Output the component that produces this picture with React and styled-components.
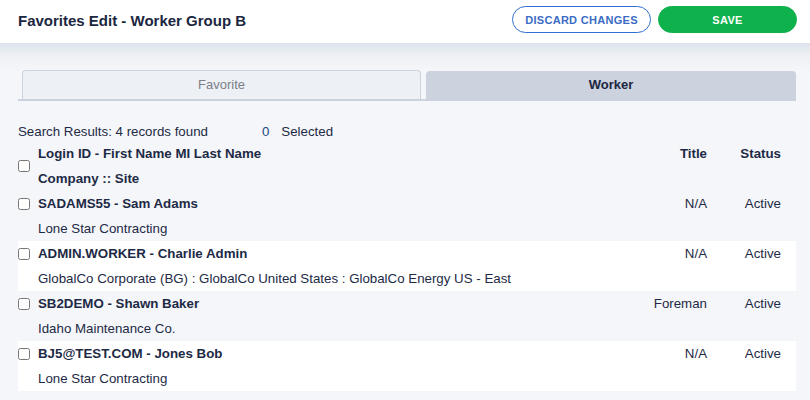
import React from "react";
import styled, { createGlobalStyle } from "styled-components";

const GlobalStyle = createGlobalStyle`
  html, body {
    margin: 0;
    padding: 0;
    background: #f5f6fa;
    font-family: "Liberation Sans", Arial, sans-serif;
    color: #1d2a45;
  }
  * { box-sizing: border-box; }
`;

const Page = styled.div`
  width: 810px;
  min-height: 400px;
  background: #f5f6fa;
`;

const TopBar = styled.header`
  height: 43px;
  background: #ffffff;
  display: flex;
  align-items: center;
  justify-content: space-between;
  padding: 0 13px 0 18px;
`;

const Heading = styled.h1`
  margin: 0;
  font-size: 15px;
  font-weight: 700;
  color: #1b2640;
  padding-bottom: 2px;
`;

const Actions = styled.div`
  display: flex;
  gap: 7px;
  align-self: flex-start;
  padding-top: 6px;
`;

const PillButton = styled.button`
  width: 139px;
  height: 27px;
  border-radius: 14px;
  font-family: "Liberation Sans", Arial, sans-serif;
  font-size: 11px;
  font-weight: 700;
  letter-spacing: 0.3px;
  text-transform: uppercase;
  cursor: pointer;
  border: 1px solid ${(p) => (p.$primary ? "#0fb14c" : "#2f6fd1")};
  background: ${(p) => (p.$primary ? "#0fb14c" : "#ffffff")};
  color: ${(p) => (p.$primary ? "#ffffff" : "#3a6cc4")};
`;

const Main = styled.main`
  padding: 27px 14px 10px 18px;
  background: linear-gradient(#dde2eb 0px, #eef0f5 12px, #f5f6fa 28px);
`;

const TabBar = styled.div`
  display: flex;
  align-items: flex-end;
  gap: 5px;
  padding-left: 4px;
  border-bottom: 2px solid #ccd2dd;
`;

const Tab = styled.div`
  height: ${(p) => (p.$active ? "28px" : "29px")};
  width: ${(p) => p.$w}px;
  display: flex;
  align-items: center;
  justify-content: center;
  padding-bottom: 2px;
  font-size: 13px;
  border-radius: 4px 4px 0 0;
  border: 1px solid ${(p) => (p.$active ? "#ccd2de" : "#cdd3dd")};
  border-bottom: none;
  background: ${(p) => (p.$active ? "#ccd2de" : "#edf0f5")};
  color: ${(p) => (p.$active ? "#1c2741" : "#7b7f88")};
  font-weight: ${(p) => (p.$active ? 700 : 400)};
`;

const Summary = styled.div`
  display: flex;
  align-items: center;
  height: 20px;
  margin-top: 20px;
  font-size: 13.3px;
  color: #1d2a45;
`;

const Count = styled.span`
  margin-left: 54px;
  color: #22477a;
`;

const SelectedLabel = styled.span`
  margin-left: 12px;
`;

const Grid = styled.div`
  display: grid;
  grid-template-columns: 20px 1fr 100px 74px;
  padding-right: 15px;
  font-size: 13.3px;
  background: ${(p) => (p.$white ? "#ffffff" : "transparent")};
`;

const Cell = styled.div`
  height: 25px;
  display: flex;
  align-items: center;
  font-weight: ${(p) => (p.$bold ? 700 : 400)};
  justify-content: ${(p) => (p.$right ? "flex-end" : "flex-start")};
  grid-column: ${(p) => p.$span || "auto"};
  white-space: nowrap;
`;

const BoxCell = styled.div`
  grid-row: ${(p) => (p.$tall ? "1 / span 2" : "1")};
  display: flex;
  align-items: center;
`;

const Check = styled.input.attrs({ type: "checkbox" })`
  width: 12px;
  height: 12px;
  margin: 0;
`;

const rows = [
  { id: "SADAMS55 - Sam Adams", co: "Lone Star Contracting", title: "N/A", status: "Active" },
  {
    id: "ADMIN.WORKER - Charlie Admin",
    co: "GlobalCo Corporate (BG) : GlobalCo United States : GlobalCo Energy US - East",
    title: "N/A",
    status: "Active",
  },
  { id: "SB2DEMO - Shawn Baker", co: "Idaho Maintenance Co.", title: "Foreman", status: "Active" },
  { id: "BJ5@TEST.COM - Jones Bob", co: "Lone Star Contracting", title: "N/A", status: "Active" },
];

export default function App() {
  return (
    <Page>
      <GlobalStyle />
      <TopBar>
        <Heading>Favorites Edit - Worker Group B</Heading>
        <Actions>
          <PillButton>Discard Changes</PillButton>
          <PillButton $primary>Save</PillButton>
        </Actions>
      </TopBar>
      <Main>
        <TabBar>
          <Tab $w={399}>Favorite</Tab>
          <Tab $w={370} $active>
            Worker
          </Tab>
        </TabBar>
        <Summary>
          Search Results: 4 records found
          <Count>0</Count>
          <SelectedLabel>Selected</SelectedLabel>
        </Summary>
        <Grid>
          <BoxCell $tall>
            <Check />
          </BoxCell>
          <Cell $bold>Login ID - First Name MI Last Name</Cell>
          <Cell $bold $right>Title</Cell>
          <Cell $bold $right>Status</Cell>
          <Cell $bold $span="2 / span 3">Company :: Site</Cell>
        </Grid>
        {rows.map((r, i) => (
          <Grid key={r.id} $white={i % 2 === 1}>
            <BoxCell>
              <Check />
            </BoxCell>
            <Cell $bold>{r.id}</Cell>
            <Cell $right>{r.title}</Cell>
            <Cell $right>{r.status}</Cell>
            <Cell $span="2 / span 3">{r.co}</Cell>
          </Grid>
        ))}
      </Main>
    </Page>
  );
}
